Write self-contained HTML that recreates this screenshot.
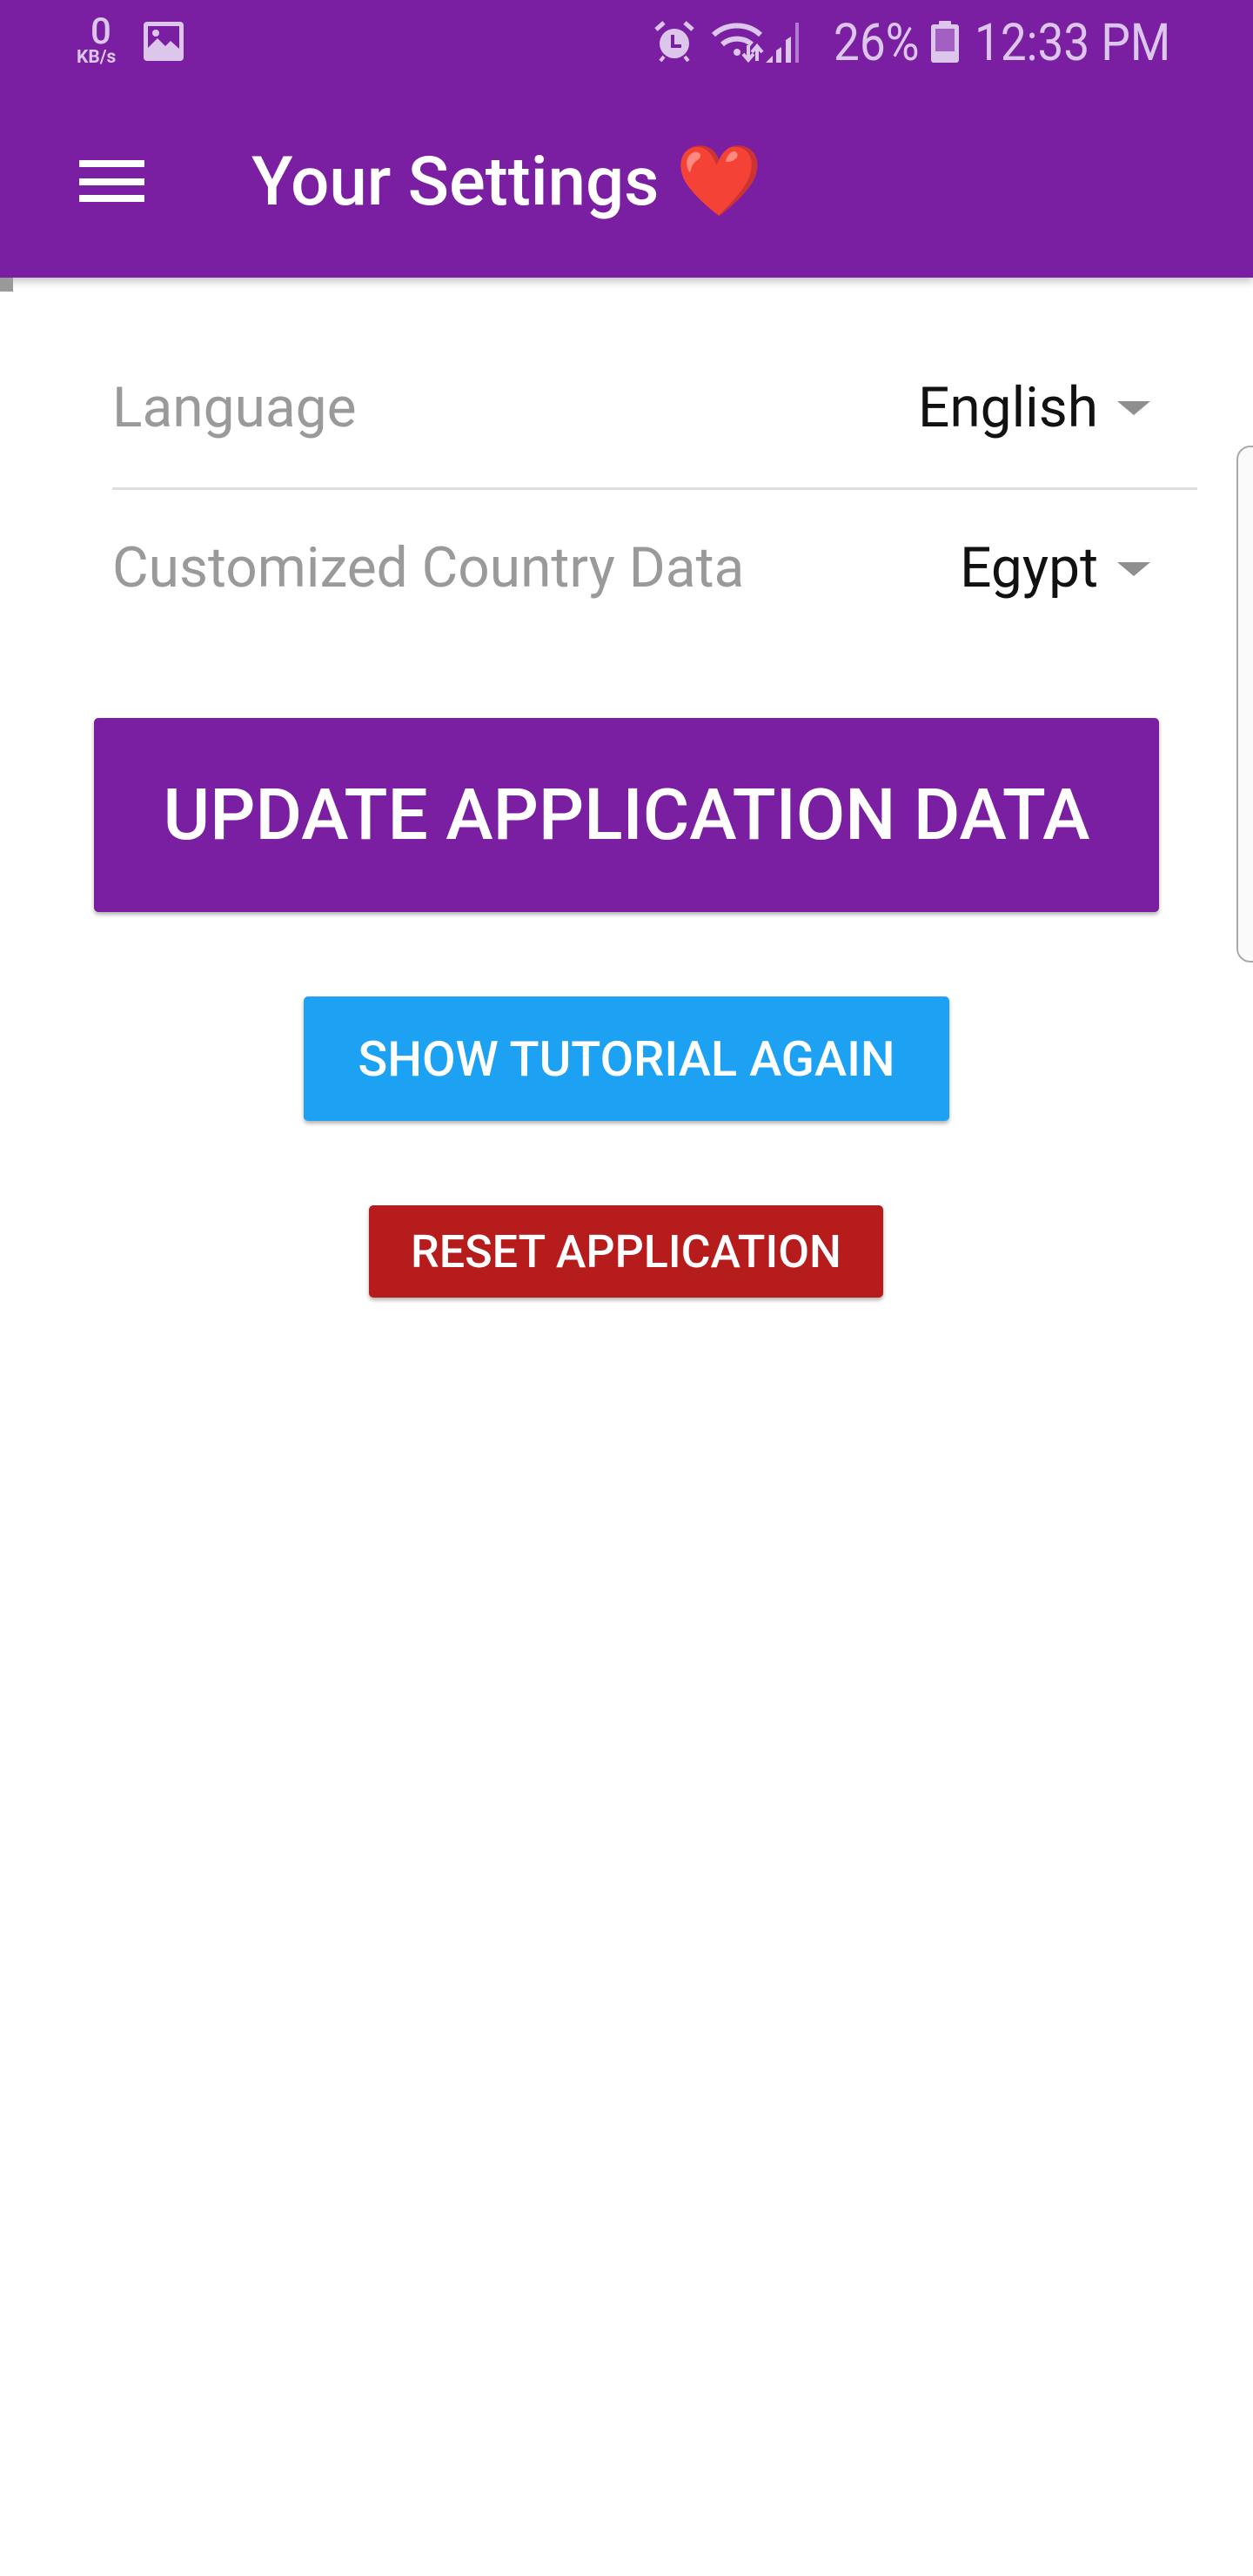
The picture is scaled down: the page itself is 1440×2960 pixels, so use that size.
<!DOCTYPE html>
<html><head><meta charset="utf-8"><style>
*{margin:0;padding:0;box-sizing:border-box}
body{width:1440px;height:2960px;background:#fff;position:relative;overflow:hidden;font-family:"Roboto","Liberation Sans",sans-serif}
.abs{position:absolute}
.hdr{left:0;top:0;width:1440px;height:319px;background:#7b1fa2;box-shadow:0 4px 10px rgba(0,0,0,.25)}
.st{color:#dcc6ec;white-space:nowrap}
.btn{position:absolute;color:#fff;display:flex;align-items:center;justify-content:center;border-radius:5px;box-shadow:0 3px 5px rgba(0,0,0,.3);white-space:nowrap}
.lbl{color:#9a9a9a;font-size:64px;white-space:nowrap}
.val{color:#111;font-size:64px;white-space:nowrap;text-align:right}
.arr{width:0;height:0;border-left:19px solid transparent;border-right:19px solid transparent;border-top:16px solid #8f8f8f}
</style></head><body>
<div class="abs hdr"></div>
<div class="abs st" style="left:104px;top:16px;font-size:42px;line-height:42px;font-weight:500">0</div>
<div class="abs st" style="left:88px;top:56px;font-size:21px;font-weight:bold;line-height:20px">KB/s</div>
<svg class="abs" style="left:165px;top:25px" width="46" height="45" viewBox="0 0 46 45"><rect x="0" y="0" width="46" height="45" rx="4" fill="#dcc6ec"/><rect x="5" y="5" width="36" height="32" fill="#7b1fa2"/><path d="M5 37 L5 30 L16 19 L25 28 L31 22 L41 31 L41 37Z" fill="#dcc6ec"/><circle cx="14" cy="13" r="4" fill="#dcc6ec"/></svg>
<svg class="abs" style="left:752px;top:23px" width="46" height="50" viewBox="0 0 46 50"><circle cx="23" cy="27" r="17" fill="#dcc6ec"/><path d="M2 11 L11 3 M44 11 L35 3" stroke="#dcc6ec" stroke-width="5"/><path d="M7 47 L11 42 M39 47 L35 42" stroke="#dcc6ec" stroke-width="4"/><path d="M21 17 V30 H31" stroke="#7b1fa2" stroke-width="4" fill="none"/></svg>
<svg class="abs" style="left:818px;top:24px" width="124" height="50" viewBox="0 0 124 50"><path d="M2 16 A40 40 0 0 1 56 16" stroke="#dcc6ec" stroke-width="6" fill="none"/><path d="M12 27 A26 26 0 0 1 46 27" stroke="#dcc6ec" stroke-width="6" fill="none"/><circle cx="29" cy="36" r="4" fill="#dcc6ec"/><path d="M42 28 V44 M36 38 L42 45 L48 38 M52 46 V30 M46 36 L52 29 L58 36" stroke="#dcc6ec" stroke-width="4" fill="none"/><path d="M62 48 L70 40 V48Z M74 48 V34 L80 30 V48Z M85 48 V22 L91 18 V48Z" fill="#dcc6ec"/><rect x="96" y="2" width="4" height="46" fill="#b27ad0"/></svg>
<div class="abs st" style="left:958px;top:17px;font-size:59px;line-height:66px;transform:scaleX(.9);transform-origin:left">26%</div>
<svg class="abs" style="left:1070px;top:24px" width="32" height="48" viewBox="0 0 32 48"><rect x="9" y="0" width="14" height="5" rx="1" fill="#dcc6ec"/><rect x="0" y="4" width="32" height="44" rx="3" fill="#dcc6ec"/><rect x="5" y="9" width="22" height="26" fill="#a35fc2"/></svg>
<div class="abs st" style="left:1120px;top:17px;font-size:59px;line-height:66px;transform:scaleX(.9);transform-origin:left">12:33 PM</div>
<div class="abs" style="left:91px;top:184px;width:75px;height:8px;background:#fff"></div>
<div class="abs" style="left:91px;top:205px;width:75px;height:8px;background:#fff"></div>
<div class="abs" style="left:91px;top:224px;width:75px;height:8px;background:#fff"></div>
<div class="abs" style="left:289px;top:163px;font-size:78px;font-weight:500;line-height:90px;color:#fff;white-space:nowrap">Your Settings <span style="font-family:'Noto Color Emoji','DejaVu Sans',sans-serif;color:#e52a2a;font-size:80px">&#10084;&#65039;</span></div>
<div class="abs" style="left:0;top:319px;width:15px;height:16px;background:#999"></div>
<div class="abs lbl" style="left:129px;top:432px;line-height:74px">Language</div>
<div class="abs val" style="right:178px;top:432px;line-height:74px">English</div>
<div class="abs arr" style="left:1284px;top:461px"></div>
<div class="abs" style="left:129px;top:560px;width:1247px;height:3px;background:#dedede"></div>
<div class="abs lbl" style="left:129px;top:616px;line-height:74px">Customized Country Data</div>
<div class="abs val" style="right:178px;top:616px;line-height:74px">Egypt</div>
<div class="abs arr" style="left:1284px;top:646px"></div>
<div class="abs" style="left:1421px;top:512px;width:40px;height:594px;border:2px solid #aaa;border-radius:16px;background:#fafafa"></div>
<div class="btn" style="left:108px;top:825px;width:1224px;height:223px;background:#7b1fa2;font-size:82px;font-weight:500">UPDATE APPLICATION DATA</div>
<div class="btn" style="left:349px;top:1145px;width:742px;height:143px;background:#1da1f2;font-size:56px;font-weight:500">SHOW TUTORIAL AGAIN</div>
<div class="btn" style="left:424px;top:1385px;width:591px;height:106px;background:#b71c1c;font-size:52px;font-weight:500">RESET APPLICATION</div>
</body></html>
